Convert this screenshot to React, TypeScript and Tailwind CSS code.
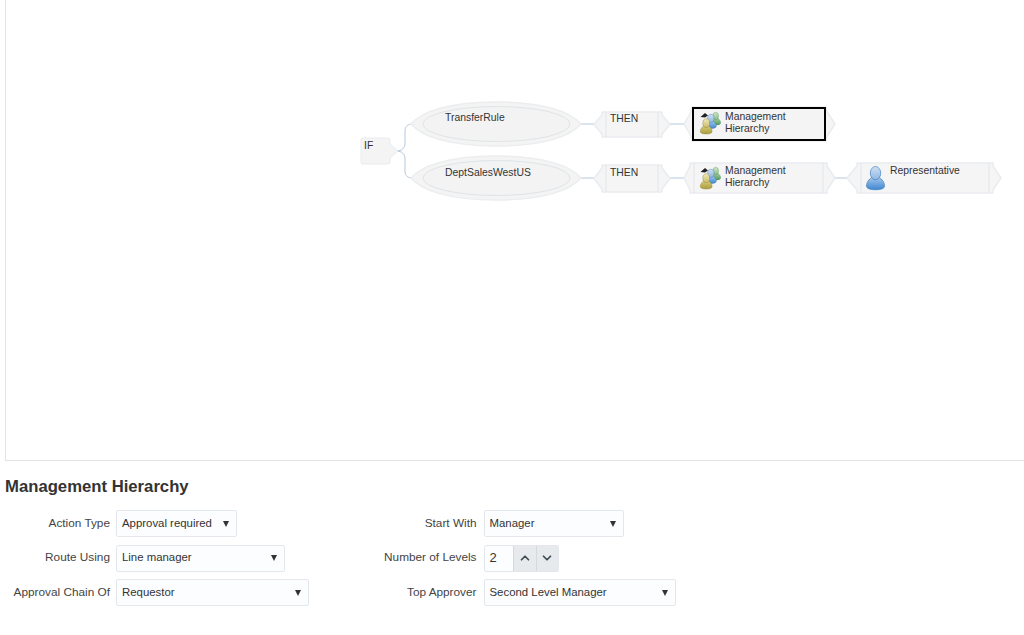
import { ChevronDown, ChevronUp } from 'lucide-react';

function Lens({ cy }: { cy: number }) {
  return (
    <g>
      <path
        d={`M411 ${cy} C422 ${cy - 13} 450 ${cy - 22} 496 ${cy - 22} C542 ${cy - 22} 570 ${cy - 13} 581 ${cy} C570 ${cy + 13} 542 ${cy + 22} 496 ${cy + 22} C450 ${cy + 22} 422 ${cy + 13} 411 ${cy} Z`}
        fill="#f4f4f4"
        stroke="#ebedee"
        strokeWidth="1.5"
      />
      <ellipse cx="496.5" cy={cy} rx="73.5" ry="17.5" fill="#f3f3f3" stroke="#dfe4e8" strokeWidth="1" />
    </g>
  );
}

// box with a chevron pointing in on the left and out on the right
function ChevronNode({ x1, x2, y1, y2, leftTip, rightTip, inset = 4, selected = false }: {
  x1: number; x2: number; y1: number; y2: number; leftTip: number; rightTip: number; inset?: number; selected?: boolean;
}) {
  const cy = (y1 + y2) / 2;
  const half = (y2 - y1) / 2 - 3;
  return (
    <g>
      <path
        d={`M${x1} ${y1} L${x2} ${y1} L${x2} ${cy - half} L${rightTip} ${cy} L${x2} ${cy + half} L${x2} ${y2} L${x1} ${y2} L${x1} ${cy + half} L${leftTip} ${cy} L${x1} ${cy - half} Z`}
        fill="#f5f5f5"
        stroke="#e9ecef"
        strokeWidth="1.5"
        strokeLinejoin="round"
      />
      {selected ? (
        <rect x={x1 + 1} y={y1 + 1} width={x2 - x1 - 2} height={y2 - y1 - 2} fill="#f4f4f4" stroke="#000" strokeWidth="2" />
      ) : (
        <g stroke="#e1e6ea" strokeWidth="1">
          <line x1={x1 + inset} y1={y1} x2={x1 + inset} y2={y2} />
          <line x1={x2 - inset} y1={y1} x2={x2 - inset} y2={y2} />
        </g>
      )}
    </g>
  );
}

function PersonIcon({ x, y, scale, tone, edge }: { x: number; y: number; scale: number; tone: string; edge: string }) {
  return (
    <g transform={`translate(${x} ${y}) scale(${scale})`}>
      <path
        d="M6 12 C3 14 0.5 17 0.5 21 C0.5 24 5 25 10 25 C15 25 19.5 24 19.5 21 C19.5 17 17 14 14 12 Z"
        fill={`url(#${tone}-body)`}
        stroke={edge}
        strokeWidth="0.7"
      />
      <ellipse cx="10" cy="7.5" rx="5.5" ry="7" fill={`url(#${tone}-head)`} stroke={edge} strokeWidth="0.7" />
    </g>
  );
}

function GroupIcon({ x, y }: { x: number; y: number }) {
  return (
    <g transform={`translate(${x} ${y})`}>
      <PersonIcon x={10.5} y={1} scale={0.52} tone="green" edge="#4a8a55" />
      <PersonIcon x={5} y={3} scale={0.58} tone="blue" edge="#3f78b8" />
      <PersonIcon x={0} y={7.5} scale={0.62} tone="yellow" edge="#8f8436" />
      <path d="M0.5 6 L5 2 L8 4.5 L5 6.5 Z" fill="#222" />
    </g>
  );
}

function Gradients() {
  const tones = [
    ['green', '#cfe5c8', '#8cbf8a', '#a5cf9f', '#4f9a5c'],
    ['blue', '#cfe0f4', '#8fb5e3', '#a3c6ec', '#3f86d2'],
    ['yellow', '#efe9ba', '#c9bd6a', '#d8cd78', '#a89b3e'],
  ];
  return (
    <defs>
      {tones.map(([id, h1, h2, b1, b2]) => (
        <g key={id}>
          <linearGradient id={`${id}-head`} x1="0" y1="0" x2="0" y2="1">
            <stop offset="0" stopColor={h1} />
            <stop offset="1" stopColor={h2} />
          </linearGradient>
          <linearGradient id={`${id}-body`} x1="0" y1="0" x2="0" y2="1">
            <stop offset="0" stopColor={b1} />
            <stop offset="1" stopColor={b2} />
          </linearGradient>
        </g>
      ))}
    </defs>
  );
}

function Diagram() {
  return (
    <svg className="absolute left-0 top-0" width="1018" height="459" viewBox="6 0 1018 459">
      <Gradients />
      <g fill="none" stroke="#b4c9dc" strokeWidth="1">
        <path d="M396 151 C402 151 405 148 405 143 L405 131 C405 126 408 124 413 124" />
        <path d="M396 151 C402 151 405 154 405 159 L405 171 C405 176 408 178 413 178" />
        <path d="M580 124 L595 124 M580 178 L595 178 M669 124 L685 124 M669 178 L685 178 M834 178 L848 178" />
      </g>
      <path
        d="M361 140 Q361 138 363 138 L388 138 Q390 138 390 140 L390 144 L398 151 L390 158 L390 162 Q390 164 388 164 L363 164 Q361 164 361 162 Z"
        fill="#f4f4f4"
        stroke="#e8ebed"
        strokeWidth="1"
      />
      <Lens cy={124} />
      <Lens cy={178} />
      <ChevronNode x1={602} x2={662} y1={112} y2={137} leftTip={594} rightTip={670} />
      <ChevronNode x1={602} x2={662} y1={165} y2={192} leftTip={594} rightTip={670} />
      <ChevronNode x1={692} x2={826} y1={107} y2={141} leftTip={684} rightTip={835} selected />
      <ChevronNode x1={690} x2={827} y1={163} y2={193} leftTip={684} rightTip={835} />
      <ChevronNode x1={857} x2={993} y1={163} y2={193} leftTip={847} rightTip={1001} />
      <GroupIcon x={700} y={111} />
      <GroupIcon x={700} y={166} />
      <PersonIcon x={866} y={166} scale={0.95} tone="blue" edge="#3f7dc0" />
    </svg>
  );
}

function NodeText({ className, children }: { className: string; children: React.ReactNode }) {
  return <div className={`absolute text-[10.4px] leading-[12px] text-[#333] ${className}`}>{children}</div>;
}

function Field({ label, width, value, labelWidth }: { label: string; width: string; value: string; labelWidth: string }) {
  return (
    <div className="flex items-center gap-[6px] h-[27px]">
      <label className={`${labelWidth} text-right whitespace-nowrap text-[11.8px] text-[#444]`}>{label}</label>
      <div className={`${width} h-full flex items-center justify-between pl-[5px] pr-[7px] border border-[#e4e8ec] rounded-[2px] bg-[#fcfdfe] text-[#333]`}>
        <span>{value}</span>
        <svg width="6" height="6" viewBox="0 0 6 6"><path d="M0 0 L6 0 L3 6 Z" fill="#333" /></svg>
      </div>
    </div>
  );
}

export default function App() {
  return (
    <div className="w-[1024px] h-[635px] overflow-hidden bg-white font-['Liberation_Sans',Arial,sans-serif] text-[11.4px]">
      <div className="relative ml-[5px] h-[461px] border-l border-b border-[#e2e5e8]">
        <Diagram />
        <NodeText className="left-[358px] top-[140px]">IF</NodeText>
        <NodeText className="left-[439px] top-[112px]">TransferRule</NodeText>
        <NodeText className="left-[439px] top-[167px]">DeptSalesWestUS</NodeText>
        <NodeText className="left-[604px] top-[113px]">THEN</NodeText>
        <NodeText className="left-[604px] top-[167px]">THEN</NodeText>
        <NodeText className="left-[719px] top-[111px]">Management<br />Hierarchy</NodeText>
        <NodeText className="left-[719px] top-[165px]">Management<br />Hierarchy</NodeText>
        <NodeText className="left-[884px] top-[165px]">Representative</NodeText>
      </div>

      <h2 className="ml-[5px] mt-[15px] text-[16.7px] leading-[22px] font-bold text-[#333]">Management Hierarchy</h2>

      <div className="flex mt-[12px]">
        <div className="w-[367.5px] flex flex-col gap-[7.5px]">
          <Field label="Action Type" labelWidth="w-[110px]" width="w-[121px]" value="Approval required" />
          <Field label="Route Using" labelWidth="w-[110px]" width="w-[169px]" value="Line manager" />
          <Field label="Approval Chain Of" labelWidth="w-[110px]" width="w-[193px]" value="Requestor" />
        </div>
        <div className="flex flex-col gap-[7.5px]">
          <Field label="Start With" labelWidth="w-[110px] pr-[1px]" width="w-[140px]" value="Manager" />
          <div className="flex items-center gap-[6px] h-[27px]">
            <label className="w-[110px] pr-[1px] text-right whitespace-nowrap text-[11.8px] text-[#444]">Number of Levels</label>
            <div className="w-[75px] h-full flex border border-[#e4e8ec] rounded-[2px] bg-[#fcfdfe]">
              <span className="w-[29px] pl-[5px] self-center text-[13px] text-[#333]">2</span>
              <button className="w-[23px] flex items-center justify-center bg-[#e6eaec] border-l border-[#d3d9dd]">
                <ChevronUp size={14} strokeWidth={3} color="#3f4a52" />
              </button>
              <button className="w-[22px] flex items-center justify-center bg-[#e6eaec] border-l border-[#d3d9dd]">
                <ChevronDown size={14} strokeWidth={3} color="#3f4a52" />
              </button>
            </div>
          </div>
          <Field label="Top Approver" labelWidth="w-[110px] pr-[1px]" width="w-[192px]" value="Second Level Manager" />
        </div>
      </div>
    </div>
  );
}
